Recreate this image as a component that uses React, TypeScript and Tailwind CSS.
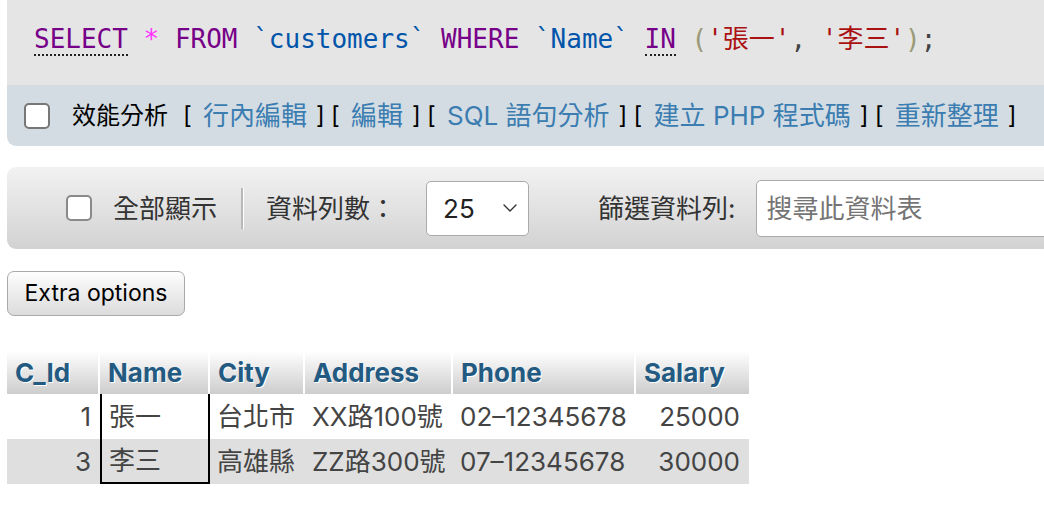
import { ChevronDown } from "lucide-react";

const sans = "font-['Inter','Noto_Sans_CJK_TC',sans-serif]";
const mono = "font-['DejaVu_Sans_Mono','Noto_Sans_CJK_TC',monospace]";

function Box({ className = "" }: { className?: string }) {
  return <div className={`h-[26px] w-[26px] shrink-0 rounded-[5px] border-2 bg-white ${className}`} />;
}

function Br({ c, className = "" }: { c: string; className?: string }) {
  return <span className={`inline-block w-[8px] text-center ${className}`}>{c}</span>;
}

const actions = ["行內編輯", "編輯", "SQL 語句分析", "建立 PHP 程式碼", "重新整理"];

const cols = [
  { key: "C_Id", w: "w-[93px]", right: true },
  { key: "Name", w: "w-[110px]", right: false },
  { key: "City", w: "w-[95px]", right: false },
  { key: "Address", w: "w-[148px]", right: false },
  { key: "Phone", w: "w-[183px]", right: false },
  { key: "Salary", w: "w-[113px]", right: true },
];

const rows = [
  ["1", "張一", "台北市", "XX路100號", "02–12345678", "25000"],
  ["3", "李三", "高雄縣", "ZZ路300號", "07–12345678", "30000"],
];

export default function App() {
  return (
    <div className={`h-[508px] w-[1044px] overflow-hidden bg-white pl-[7px] ${sans}`}>
      <div className="w-[1080px]">
        {/* query box */}
        <div className={`flex h-[85px] items-center bg-[#e5e5e5] pl-[27px] pb-[6px] text-[26px] ${mono}`}>
          <span className="whitespace-pre">
            <span className="border-b-2 border-dotted border-[#222] text-[#770088]">SELECT</span>{" "}
            <span className="text-[#ff33ff]">*</span> <span className="text-[#770088]">FROM</span>{" "}
            <span className="text-[#0055aa]">`customers`</span> <span className="text-[#770088]">WHERE</span>{" "}
            <span className="text-[#0055aa]">`Name`</span>{" "}
            <span className="border-b-2 border-dotted border-[#222] text-[#770088]">IN</span>{" "}
            <span className="text-[#999977]">(</span>
            <span className="text-[#aa1111]">'張一'</span>
            <span className="text-[#444]">, </span>
            <span className="text-[#aa1111]">'李三'</span>
            <span className="text-[#999977]">)</span>
            <span className="text-[#444]">;</span>
          </span>
        </div>
        <div className="flex h-[61px] items-center rounded-b-[9px] bg-[#d3dce3] pl-[17px] text-[24px] text-black">
          <Box className="border-[#777]" />
          <span className="ml-[22px]">效能分析</span>
          {actions.map((a, i) => (
            <span key={a} className="flex items-center">
              <Br c="[" className={i === 0 ? "ml-[15px]" : "ml-[7px]"} />
              <span className="ml-[12px] whitespace-pre text-[26px] text-[#3b7cb1]">{a}</span>
              <Br c="]" className="ml-[9px]" />
            </span>
          ))}
        </div>

        {/* navigation toolbar */}
        <div className="mt-[21px] flex h-[82px] items-center rounded-[9px] bg-gradient-to-b from-[#f2f2f2] to-[#d2d2d2] pl-[59px] text-[26px] text-[#333]">
          <Box className="border-[#8a8a8a]" />
          <span className="ml-[21px]">全部顯示</span>
          <div className="ml-[24px] h-[41px] w-[2px] bg-[#b8b8b8] shadow-[1px_0_0_#fff]" />
          <span className="ml-[23px]">資料列數：</span>
          <div className="ml-[30px] flex h-[55px] w-[103px] items-center justify-between rounded-[5px] border border-[#aaa] bg-white pl-[16px] pr-[6px]">
            <span className="text-[#222]">25</span>
            <ChevronDown size={24} strokeWidth={1.4} className="text-[#333]" />
          </div>
          <span className="ml-[69px]">篩選資料列:</span>
          <div className="ml-[20px] flex h-[57px] flex-1 items-center rounded-l-[5px] border border-[#aaa] bg-white pl-[10px] text-[#757575]">
            搜尋此資料表
          </div>
        </div>

        <button className="mt-[22px] h-[45px] w-[178px] rounded-[7px] border border-[#aaa] bg-gradient-to-b from-[#fdfdfd] to-[#dcdcdc] text-[23px] text-black">
          Extra options
        </button>

        {/* result table */}
        <div className="mt-[35px] w-[742px]">
          <div className="flex h-[43px]">
            {cols.map((c, i) => (
              <div
                key={c.key}
                className={`${c.w} flex items-center bg-gradient-to-b from-white to-[#cdcdcd] pl-[8px] font-bold text-[#235a81] [text-shadow:1px_1px_0_#fff] ${
                  i < cols.length - 1 ? "border-r-2 border-white" : ""
                }`}
              >
                <span className="text-[26px]">{c.key}</span>
              </div>
            ))}
          </div>
          {rows.map((r, ri) => (
            <div key={ri} className={`flex h-[45px] text-[26px] text-[#444] ${ri === 1 ? "bg-[#dfdfdf]" : "bg-white"}`}>
              {r.map((v, ci) => {
                const c = cols[ci];
                const isName = ci === 1;
                return (
                  <div
                    key={ci}
                    className={`${c.w} flex items-center whitespace-nowrap ${c.right ? "justify-end pr-[9px]" : "pl-[7px]"} ${
                      isName ? "border-x-2 border-black" : ""
                    } ${isName && ri === rows.length - 1 ? "border-b-2" : ""}`}
                  >
                    {v}
                  </div>
                );
              })}
            </div>
          ))}
        </div>
      </div>
    </div>
  );
}
